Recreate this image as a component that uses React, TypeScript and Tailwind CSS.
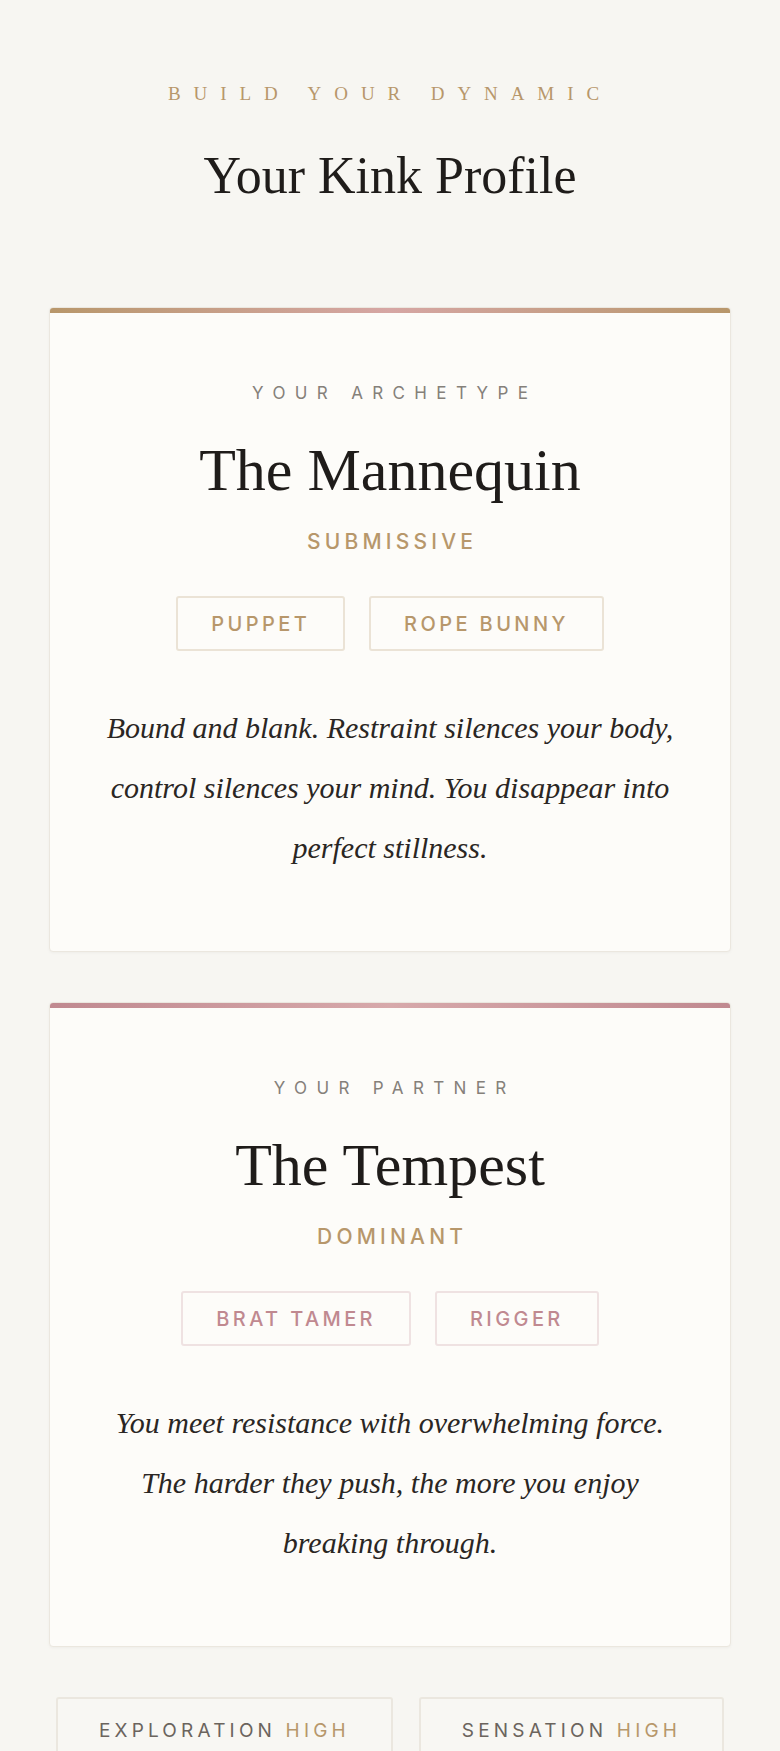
import React from "react";

type Profile = {
	label: string;
	name: string;
	role: string;
	tags: string[];
	lines: string[];
	tone: "gold" | "rose";
};

const profiles: Profile[] = [
	{
		label: "Your Archetype",
		name: "The Mannequin",
		role: "Submissive",
		tags: ["Puppet", "Rope Bunny"],
		lines: ["Bound and blank. Restraint silences your body,", "control silences your mind. You disappear into", "perfect stillness."],
		tone: "gold",
	},
	{
		label: "Your Partner",
		name: "The Tempest",
		role: "Dominant",
		tags: ["Brat Tamer", "Rigger"],
		lines: ["You meet resistance with overwhelming force.", "The harder they push, the more you enjoy", "breaking through."],
		tone: "rose",
	},
];

const serif = "font-['Liberation_Serif','Times_New_Roman',serif]";
const sans = "font-['Inter','Liberation_Sans',sans-serif]";

const ProfileCard = ({ profile }: { profile: Profile }) => {
	const gold = profile.tone === "gold";
	return (
		<section className="rounded-[4px] border border-[#ebe7df] bg-[#fdfcf9] overflow-hidden shadow-[0_1px_3px_rgba(0,0,0,0.04)]">
			{/* accent bar */}
			<div
				className={
					gold
						? "h-[5px] bg-linear-to-r from-[#b8976b] via-[#d6a6a4] to-[#b8976b]"
						: "h-[5px] bg-linear-to-r from-[#c08990] via-[#d7a9ab] to-[#c08990]"
				}
			/>
			<div className="px-[40px] pt-[70px] pb-[73px] text-center">
				<p className={`${sans} text-[17px] leading-[20px] tracking-[0.55em] uppercase text-[#85807a] pl-[0.55em]`}>{profile.label}</p>
				<h2 className={`${serif} mt-[34px] text-[60px] leading-[66px] text-[#1f1c1a]`}>{profile.name}</h2>
				<p className={`${sans} mt-[26px] text-[21px] leading-[26px] font-medium tracking-[0.2em] uppercase text-[#b7976b] pl-[0.2em]`}>{profile.role}</p>
				<ul className="mt-[41px] flex justify-center gap-[24px]">
					{profile.tags.map((tag) => (
						<li
							key={tag}
							className={
								gold
									? `${sans} h-[55px] px-[33px] flex items-center rounded-[3px] border-2 border-[#ebe3d6] text-[20px] font-medium tracking-[0.17em] uppercase text-[#b7976b]`
									: `${sans} h-[55px] px-[33px] flex items-center rounded-[3px] border-2 border-[#efe2e2] text-[20px] font-medium tracking-[0.17em] uppercase text-[#c08990]`
							}
						>
							{tag}
						</li>
					))}
				</ul>
				<p className={`${serif} mt-[47px] italic text-[30px] leading-[60px] text-[#2a2623]`}>
					{profile.lines.map((line, i) => (
						<span key={i} className="block">
							{line}
						</span>
					))}
				</p>
			</div>
		</section>
	);
};

export default function App() {
	return (
		<main className="min-h-screen w-full bg-[#f7f6f2] px-[49px] pb-[60px]">
			{/* header */}
			<header className="pt-[84px] text-center">
				<p className={`${serif} text-[19px] leading-[20px] tracking-[0.68em] uppercase text-[#b7976b]`}>Build your dynamic</p>
				<h1 className={`${serif} mt-[42px] text-[52px] leading-[60px] text-[#1f1c1a]`}>Your Kink Profile</h1>
			</header>

			{/* profiles */}
			<div className="mt-[101px] flex flex-col gap-[50px]">
				{profiles.map((p) => (
					<ProfileCard key={p.name} profile={p} />
				))}
			</div>

			{/* intensity */}
			<div className="mt-[50px] flex justify-center gap-[26px]">
				<div className={`${sans} rounded-[3px] border-2 border-[#ebe7df] bg-[#f8f7f3] px-[41px] pt-[22px] pb-[20px] text-[19px] leading-[20px] tracking-[0.22em] uppercase text-[#6b645d]`}>
					Exploration <span className="text-[#b7976b]">High</span>
				</div>
				<div className={`${sans} rounded-[3px] border-2 border-[#ebe7df] bg-[#f8f7f3] px-[41px] pt-[22px] pb-[20px] text-[19px] leading-[20px] tracking-[0.22em] uppercase text-[#6b645d]`}>
					Sensation <span className="text-[#b7976b]">High</span>
				</div>
			</div>
		</main>
	);
}
